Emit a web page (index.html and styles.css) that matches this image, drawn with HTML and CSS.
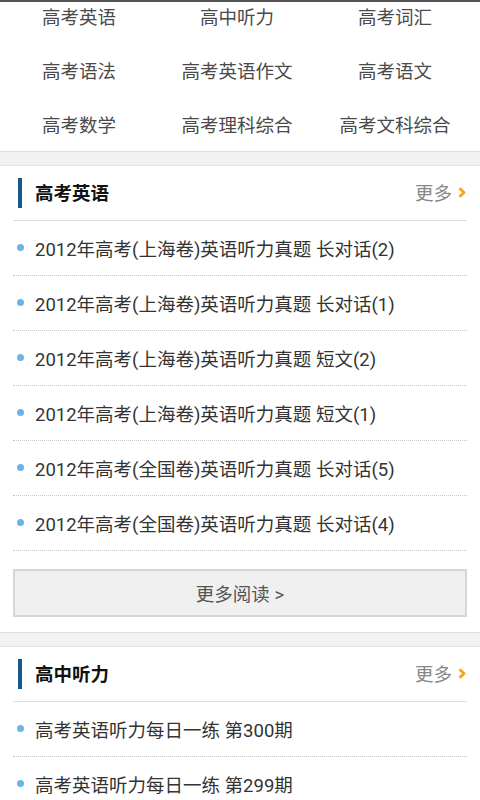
FILE: index.html
```html
<!DOCTYPE html>
<html lang="zh-CN">
<head>
<meta charset="utf-8">
<link rel="stylesheet" href="styles.css">
</head>
<body>
<div class="topline"></div>
<div class="nav">
  <div class="nav-grid">
    <a class="nav-item">高考英语</a>
    <a class="nav-item">高中听力</a>
    <a class="nav-item">高考词汇</a>
    <a class="nav-item">高考语法</a>
    <a class="nav-item">高考英语作文</a>
    <a class="nav-item">高考语文</a>
    <a class="nav-item">高考数学</a>
    <a class="nav-item">高考理科综合</a>
    <a class="nav-item">高考文科综合</a>
  </div>
</div>
<div class="band"></div>
<section class="section">
  <div class="sec-head">
    <span class="bar"></span>
    <h2 class="sec-title">高考英语</h2>
    <a class="more">更多<span class="chev"><svg width="8" height="11" viewBox="0 0 8 11"><path d="M1.5 1.2 L6 5.5 L1.5 9.8" fill="none" stroke="#f7a31c" stroke-width="2.8" stroke-linejoin="round"/></svg></span></a>
  </div>
  <ul class="list">
    <li class="item"><span class="dot"></span>2012年高考(上海卷)英语听力真题 长对话(2)</li>
    <li class="item"><span class="dot"></span>2012年高考(上海卷)英语听力真题 长对话(1)</li>
    <li class="item"><span class="dot"></span>2012年高考(上海卷)英语听力真题 短文(2)</li>
    <li class="item"><span class="dot"></span>2012年高考(上海卷)英语听力真题 短文(1)</li>
    <li class="item"><span class="dot"></span>2012年高考(全国卷)英语听力真题 长对话(5)</li>
    <li class="item"><span class="dot"></span>2012年高考(全国卷)英语听力真题 长对话(4)</li>
  </ul>
  <div class="btn">更多阅读 &gt;</div>
</section>
<div class="band"></div>
<section class="section">
  <div class="sec-head">
    <span class="bar"></span>
    <h2 class="sec-title">高中听力</h2>
    <a class="more">更多<span class="chev"><svg width="8" height="11" viewBox="0 0 8 11"><path d="M1.5 1.2 L6 5.5 L1.5 9.8" fill="none" stroke="#f7a31c" stroke-width="2.8" stroke-linejoin="round"/></svg></span></a>
  </div>
  <ul class="list">
    <li class="item"><span class="dot"></span>高考英语听力每日一练 第300期</li>
    <li class="item"><span class="dot"></span>高考英语听力每日一练 第299期</li>
    <li class="item"><span class="dot"></span>高考英语听力每日一练 第298期</li>
  </ul>
</section>
</body>
</html>
```

FILE: styles.css
```css
* { box-sizing: border-box; }
html, body { margin: 0; padding: 0; background: #fff; }
body {
  font-family: Roboto, "Noto Sans CJK SC", sans-serif;
  font-size: 18.5px;
  color: #333;
  width: 480px;
  height: 800px;
  overflow: hidden;
}
.topline { height: 2px; background: #555; }
.nav { height: 149px; overflow: hidden; }
.nav-grid {
  margin-top: -13px;
  padding-right: 6px;
  display: grid;
  grid-template-columns: repeat(3, 1fr);
  grid-auto-rows: 54px;
}
.nav-item {
  display: flex;
  align-items: center;
  justify-content: center;
  color: #4a4a4a;
  font-size: 18.5px;
  white-space: nowrap;
}
.band {
  height: 15px;
  background: #f2f2f2;
  border-top: 1px solid #dcdcdc;
  border-bottom: 1px solid #e6e6e6;
}
.section { padding: 0 13px; }
.sec-head {
  height: 55px;
  display: flex;
  align-items: center;
  border-bottom: 1px solid #dddddd;
  padding-left: 5px;
}
.bar { width: 4px; height: 30px; background: #17588d; }
.sec-title {
  margin: 0 0 0 13px;
  font-size: 18.5px;
  font-weight: bold;
  color: #111;
  flex: 1;
  position: relative;
  top: -1px;
}
.more {
  color: #888;
  display: flex;
  align-items: center;
  font-size: 18.5px;
  padding-right: 1px;
  position: relative;
  top: -1px;
}
.chev { display: flex; margin-left: 6px; }
.list { list-style: none; margin: 0; padding: 0; }
.item {
  height: 55px;
  display: flex;
  align-items: center;
  border-bottom: 1px dotted #c8c8c8;
  white-space: nowrap;
  color: #333;
}
.dot {
  width: 7px;
  height: 7px;
  border-radius: 50%;
  background: #6ab5e8;
  margin: 0 11px 0 4px;
  flex: none;
  position: relative;
  top: -1px;
}
.btn {
  margin: 18px 0 15px;
  height: 48px;
  border: 2px solid #d6d6d6;
  background: #f0f0f0;
  display: flex;
  align-items: center;
  justify-content: center;
  color: #555;
  font-size: 18.5px;
}
```
